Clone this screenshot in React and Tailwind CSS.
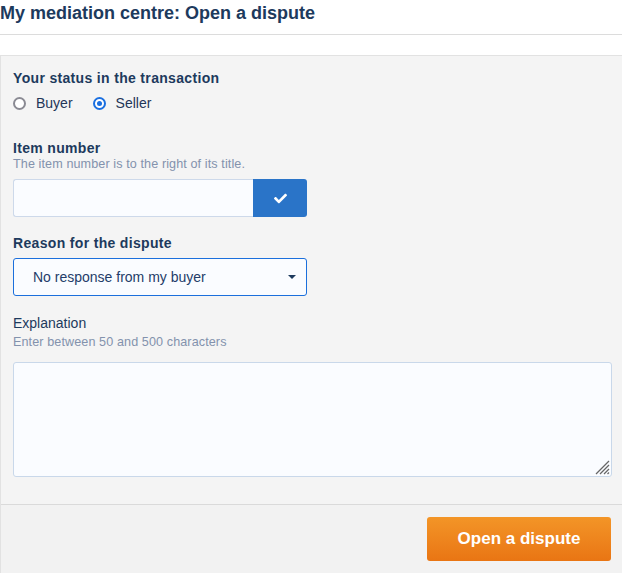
import React, { useState } from 'react';
import { FaCheck } from 'react-icons/fa';

const Radio = ({ checked, label, onClick }) => (
  <button type="button" onClick={onClick} className="flex items-center gap-[10px]">
    <span className={`flex h-[13px] w-[13px] items-center justify-center rounded-full border-2 ${checked ? 'border-[#1a6fe0]' : 'border-[#8a8a93]'} bg-white`}>
      {checked && <span className="h-[5px] w-[5px] rounded-full bg-[#1a6fe0]" />}
    </span>
    <span className="text-[14px] leading-[18px] text-[#1f3658]">{label}</span>
  </button>
);

export default function App() {
  const [status, setStatus] = useState('seller');

  return (
    <div className="w-[622px] min-h-[573px] bg-white font-['Liberation_Sans',Arial,sans-serif]">
      <h1 className="pb-2 text-[18px] font-bold leading-[26px] text-[#1d3a5d] border-b border-[#dcdcdc]">
        My mediation centre: Open a dispute
      </h1>

      <div className="mt-5 border-t border-l border-[#e2e2e2] bg-[#f4f4f4]">
        <div className="px-3 pt-[14px] pb-[27px]">
          {/* Status */}
          <p className="text-[14px] font-bold leading-4 tracking-[0.33px] text-[#1d3a5d]">Your status in the transaction</p>
          <div className="mt-2 flex items-center gap-[20px]">
            <Radio label="Buyer" checked={status === 'buyer'} onClick={() => setStatus('buyer')} />
            <Radio label="Seller" checked={status === 'seller'} onClick={() => setStatus('seller')} />
          </div>

          {/* Item number */}
          <p className="mt-[28px] text-[14px] font-bold leading-4 tracking-[0.33px] text-[#1d3a5d]">Item number</p>
          <p className="mt-px text-[12.6px] leading-[14px] tracking-[0.1px] text-[#8392ad]">The item number is to the right of its title.</p>
          <div className="mt-2 flex h-[38px] w-[294px]">
            <input className="h-full flex-1 rounded-l-[3px] border border-r-0 border-[#cdd9ea] bg-[#fafcff] px-2 text-[14px] outline-none" />
            <button className="flex h-full w-[54px] items-center justify-center rounded-r-[3px] bg-[#2a74c8] text-white">
              <FaCheck size={13} />
            </button>
          </div>

          {/* Reason */}
          <p className="mt-[18px] text-[14px] font-bold leading-4 tracking-[0.33px] text-[#1d3a5d]">Reason for the dispute</p>
          <div className="mt-[7px] flex h-[38px] w-[294px] items-center justify-between rounded-[3px] border border-[#1b6fdc] bg-[#fafcff] pl-[19px] pr-[10px]">
            <span className="text-[14px] text-[#243d69]">No response from my buyer</span>
            <span className="h-0 w-0 border-x-[4px] border-t-[4px] border-x-transparent border-t-[#1d3a5d]" />
          </div>

          {/* Explanation */}
          <p className="mt-[19px] text-[14px] leading-4 text-[#1d3a5d]">Explanation</p>
          <p className="mt-1 text-[12.6px] leading-[14px] tracking-[0.1px] text-[#8392ad]">Enter between 50 and 500 characters</p>
          <div className="relative mt-[13px] w-[599px]">
            <textarea className="block h-[115px] w-full resize-none rounded-[3px] border border-[#c9d8ea] bg-[#fafcff] p-2 text-[14px] outline-none" />
            <svg className="pointer-events-none absolute right-[2px] bottom-[2px]" width="16" height="16" viewBox="0 0 16 16">
              <g stroke="#666" strokeWidth="1.3">
                <line x1="15" y1="2" x2="2" y2="15" />
                <line x1="15" y1="6" x2="6" y2="15" />
                <line x1="15" y1="10" x2="10" y2="15" />
                <line x1="15" y1="13.5" x2="13.5" y2="15" />
              </g>
            </svg>
          </div>
        </div>

        <div className="flex justify-end border-t border-[#dadada] bg-[#f2f2f2] pt-3 pr-[11px] pb-4">
          <button className="h-[44px] w-[184px] rounded-[3px] bg-gradient-to-b from-[#f39527] to-[#e97513] text-[17px] font-bold text-white">
            Open a dispute
          </button>
        </div>
      </div>
    </div>
  );
}
